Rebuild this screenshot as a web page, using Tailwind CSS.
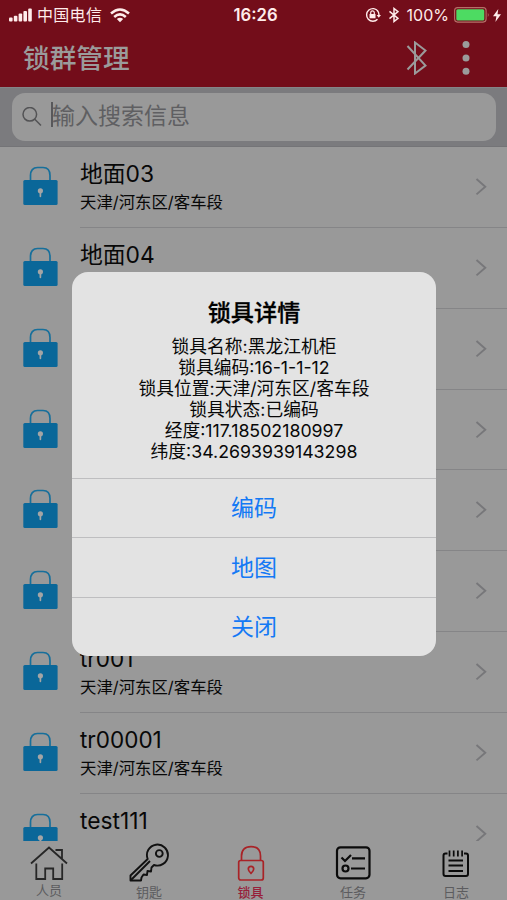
<!DOCTYPE html>
<html lang="zh-CN">
<head>
<meta charset="utf-8">
<title>锁群管理</title>
<script src="https://cdn.jsdelivr.net/npm/@tailwindcss/browser@4"></script>
</head>
<body class="bg-[#999]">
<svg class="hidden">
  <symbol id="lock" viewBox="0 0 36 42">
    <path d="M8.500 15V9.500C8.500 4.500 11 1.500 15.500 1.500H21C25.500 1.500 28 4.500 28 9.500V15" fill="none" stroke="#176f9b" stroke-width="1.700"/>
    <rect x="1.300" y="14" width="34.300" height="25" rx="1.500" fill="#0a6799"/>
    <circle cx="18.400" cy="24.800" r="2.600" fill="#a5a5a5"/>
    <path d="M18.400 25V30.300" stroke="#a5a5a5" stroke-width="1.700" stroke-linecap="round"/>
  </symbol>
  <symbol id="chev" viewBox="0 0 12 18">
    <path d="M1.500 1L10.300 8.700L1.500 16.400" fill="none" stroke="#77777a" stroke-width="1.900"/>
  </symbol>
</svg>
<div class="relative flex h-[900px] w-[507px] flex-col overflow-hidden bg-[#999] font-['Inter','Noto_Sans_CJK_SC',sans-serif] text-[#080808]">
  <header class="h-[87px] shrink-0 bg-[#730d1a]">
    <div class="grid h-[30px] grid-cols-3 items-center pr-[6px] pl-[9px] text-[#ffeceb]">
      <div class="flex items-center">
        <svg class="h-[14px] w-[23px]" viewBox="0 0 23 14" fill="currentColor"><rect x="0" y="9.500" width="3.600" height="4" rx="1"/><rect x="4.800" y="7.700" width="3.600" height="5.800" rx="1"/><rect x="9.600" y="5.500" width="3.600" height="8" rx="1"/><rect x="14.400" y="3" width="3.600" height="10.500" rx="1"/><rect x="19.200" y="0.500" width="3.600" height="13" rx="1"/></svg>
        <span class="ml-[5px] text-[16px] leading-none tracking-[0.3px]">中国电信</span>
        <svg class="ml-[8px] h-[15px] w-[20px]" viewBox="0 0 20 15" fill="none" stroke="currentColor" stroke-width="2.500"><path d="M1 5.500Q10 -2.500 19 5.500M4.200 9Q10 3.700 15.800 9"/><path d="M6.800 11Q10 8.300 13.200 11L10 14.300Z" fill="currentColor" stroke="none"/></svg>
      </div>
      <div class="pl-[1px] text-center text-[16.700px] leading-none font-semibold">16:26</div>
      <div class="flex items-center justify-end">
        <svg class="h-[16px] w-[16px]" viewBox="0 0 16 16" fill="none" stroke="currentColor"><path d="M13 4.200A6.300 6.300 0 1 0 12.500 12.200M14 8A6.300 6.300 0 0 0 12.300 3.500" stroke-width="1.400"/><path d="M11.600 8H16L13.800 10.800Z" fill="currentColor" stroke="none"/><rect x="4.500" y="7" width="6" height="4.300" fill="currentColor" stroke="none"/><path d="M5.700 7.500V5.700A1.800 1.800 0 0 1 9.300 5.700V7.500" stroke-width="1.200"/></svg>
        <svg class="ml-[8px] h-[16px] w-[10px]" viewBox="0 0 10 16" fill="none" stroke="currentColor" stroke-width="1.500"><path d="M0.500 4.300L9 11.300L5 14.500V1.500L9 4.700L0.500 11.700"/></svg>
        <span class="ml-[8px] text-[16px] leading-none">100%</span>
        <svg class="ml-[5px] h-[16px] w-[36px]" viewBox="0 0 36 16"><rect x="0.600" y="0.600" width="31.500" height="14.500" rx="3" fill="none" stroke="#b57068" stroke-width="1.100"/><rect x="2.300" y="2.300" width="28" height="11.200" rx="1.500" fill="#4ddb62"/><path d="M33.800 5.500Q35.600 7.800 33.800 10.200Z" fill="#b57068"/></svg>
        <svg class="ml-[3px] h-[13px] w-[8px]" viewBox="0 0 8 13" fill="currentColor"><path d="M5.300 0L0 7.300H3.400L2.400 13L8 5.300H4.500Z"/></svg>
      </div>
    </div>
    <div class="flex h-[56px] items-center pr-[37px] pl-[23px] text-[#9b9b9b]">
      <h1 class="grow text-[26.700px] leading-none font-medium">锁群管理</h1>
      <svg class="h-[34px] w-[21px]" viewBox="0 0 21 34" fill="none" stroke="currentColor" stroke-width="2"><path d="M1.500 5L19.500 24.500L9 32.500V1.500L19.500 9.500L1.500 28.500"/></svg>
      <svg class="ml-[35px] h-[36px] w-[8px]" viewBox="0 0 8 36" fill="currentColor"><circle cx="4" cy="4.500" r="3.500"/><circle cx="4" cy="18" r="3.500"/><circle cx="4" cy="31.300" r="3.500"/></svg>
    </div>
  </header>
  <div class="h-[60px] shrink-0 border-t border-b border-t-[#858588] border-b-[#747477] bg-[#7b7b7e] pt-[5px] pr-[11px] pl-[12px]">
    <div class="flex h-[48px] items-center rounded-[13px] bg-[#999] pl-[10px]">
      <svg class="h-[20px] w-[20px]" viewBox="0 0 20 20" fill="none" stroke="#535355" stroke-width="1.500"><circle cx="7.800" cy="7.300" r="6.800"/><path d="M12.800 12.300L19 18.500"/></svg>
      <span class="ml-[9px] h-[25px] w-[2px] -translate-y-[3px] bg-[#58585b]"></span>
      <span class="-ml-[1px] -translate-y-[1px] text-[23px] leading-none text-[#5f5f62]">输入搜索信息</span>
    </div>
  </div>
  <main class="flex h-[694px] shrink-0 flex-col overflow-hidden">
    <div class="flex h-[80.850px] shrink-0 pl-[22px]"><svg class="mt-[19px] h-[42px] w-[36px]"><use href="#lock"/></svg><div class="ml-[22px] flex grow border-b border-[#858587]"><div class="grow pt-[13px]"><div class="text-[22.800px] leading-[28px]">地面03</div><div class="mt-[4px] text-[16.400px] leading-[20px]">天津/河东区/客车段</div></div><svg class="mt-[31px] mr-[20px] h-[18px] w-[12px]"><use href="#chev"/></svg></div></div>
    <div class="flex h-[80.850px] shrink-0 pl-[22px]"><svg class="mt-[19px] h-[42px] w-[36px]"><use href="#lock"/></svg><div class="ml-[22px] flex grow border-b border-[#858587]"><div class="grow pt-[13px]"><div class="text-[22.800px] leading-[28px]">地面04</div></div><svg class="mt-[31px] mr-[20px] h-[18px] w-[12px]"><use href="#chev"/></svg></div></div>
    <div class="flex h-[80.850px] shrink-0 pl-[22px]"><svg class="mt-[19px] h-[42px] w-[36px]"><use href="#lock"/></svg><div class="ml-[22px] flex grow justify-end border-b border-[#858587]"><svg class="mt-[31px] mr-[20px] h-[18px] w-[12px]"><use href="#chev"/></svg></div></div>
    <div class="flex h-[80.850px] shrink-0 pl-[22px]"><svg class="mt-[19px] h-[42px] w-[36px]"><use href="#lock"/></svg><div class="ml-[22px] flex grow justify-end border-b border-[#858587]"><svg class="mt-[31px] mr-[20px] h-[18px] w-[12px]"><use href="#chev"/></svg></div></div>
    <div class="flex h-[80.850px] shrink-0 pl-[22px]"><svg class="mt-[19px] h-[42px] w-[36px]"><use href="#lock"/></svg><div class="ml-[22px] flex grow justify-end border-b border-[#858587]"><svg class="mt-[31px] mr-[20px] h-[18px] w-[12px]"><use href="#chev"/></svg></div></div>
    <div class="flex h-[80.850px] shrink-0 pl-[22px]"><svg class="mt-[19px] h-[42px] w-[36px]"><use href="#lock"/></svg><div class="ml-[22px] flex grow justify-end border-b border-[#858587]"><svg class="mt-[31px] mr-[20px] h-[18px] w-[12px]"><use href="#chev"/></svg></div></div>
    <div class="flex h-[80.850px] shrink-0 pl-[22px]"><svg class="mt-[19px] h-[42px] w-[36px]"><use href="#lock"/></svg><div class="ml-[22px] flex grow border-b border-[#858587]"><div class="grow pt-[13px]"><div class="text-[22.500px] leading-[28px]">tr001</div><div class="mt-[4px] text-[16.400px] leading-[20px]">天津/河东区/客车段</div></div><svg class="mt-[31px] mr-[20px] h-[18px] w-[12px]"><use href="#chev"/></svg></div></div>
    <div class="flex h-[80.850px] shrink-0 pl-[22px]"><svg class="mt-[19px] h-[42px] w-[36px]"><use href="#lock"/></svg><div class="ml-[22px] flex grow border-b border-[#858587]"><div class="grow pt-[13px]"><div class="text-[22.500px] leading-[28px]">tr00001</div><div class="mt-[4px] text-[16.400px] leading-[20px]">天津/河东区/客车段</div></div><svg class="mt-[31px] mr-[20px] h-[18px] w-[12px]"><use href="#chev"/></svg></div></div>
    <div class="flex h-[80.850px] shrink-0 pl-[22px]"><svg class="mt-[19px] h-[42px] w-[36px]"><use href="#lock"/></svg><div class="ml-[22px] flex grow"><div class="grow pt-[13px]"><div class="text-[22.800px] leading-[28px]">test111</div></div><svg class="mt-[31px] mr-[20px] h-[18px] w-[12px]"><use href="#chev"/></svg></div></div>
  </main>
  <nav class="flex h-[59px] shrink-0 bg-[#999] text-[13px] leading-[14px] text-[#5c5c5f]">
    <div class="flex w-[98px] flex-col items-center pt-[4px]"><svg class="h-[36px] w-[38px]" viewBox="0 0 38 36" fill="none" stroke="#272727" stroke-width="1.800"><path d="M1 18.500L19 2.500L37 18.500M25.500 5H32V14M6.300 18.500V34H15.200V23.500H23.200V34H32.200V18.500"/></svg><span class="mt-[2px]">人员</span></div>
    <div class="flex w-[102px] flex-col items-center pt-[2px]"><svg class="h-[39px] w-[40px]" viewBox="0 0 40 39" fill="none" stroke="#111" stroke-width="1.900" stroke-linejoin="round"><path d="M18.700 16A10.500 10.500 0 1 1 25 22L22.500 24.500L22 28.500L18.500 28L18 32L14.500 31.500L12.500 34.500L12 37.500H1.500V32.500Z"/><circle cx="30.300" cy="10.500" r="3.400"/><path d="M2 37L21 18"/></svg><span class="mt-[3px]">钥匙</span></div>
    <div class="flex w-[101px] flex-col items-center pt-[4px] font-medium text-[#97203a]"><svg class="h-[38px] w-[28px]" viewBox="0 0 28 38" fill="none" stroke="#a92327" stroke-width="1.700"><rect x="1.700" y="15.500" width="24.600" height="19.500" rx="2"/><path d="M4.500 15.500V11Q4.500 1.700 14 1.700Q23.500 1.700 23.500 11V15.500"/><path d="M14 28.300C12.500 27 11.300 25.500 11.300 24A2.700 2.700 0 0 1 16.700 24C16.700 25.500 15.500 27 14 28.300Z"/></svg><span class="mt-[2px]">锁具</span></div>
    <div class="flex w-[104px] flex-col items-center pt-[4px]"><svg class="h-[36px] w-[36px]" viewBox="0 0 36 36" fill="none" stroke="#0b0b0b" stroke-width="2.200"><rect x="2" y="2.300" width="32.500" height="31" rx="3.500"/><path d="M6.500 12.500L10 16L16 10M17 13.300H30M16 23.500H30"/><circle cx="10.500" cy="23.500" r="3"/></svg><span class="mt-[4px]">任务</span></div>
    <div class="flex w-[102px] flex-col items-center pt-[4px]"><svg class="h-[36px] w-[28px]" viewBox="0 0 28 36" fill="none" stroke="#0b0b0b" stroke-width="2"><path d="M5.500 8.500H3.500Q1.500 8.500 1.500 10.500V29Q1.500 31 3.500 31H24Q26 31 26 29V10.500Q26 8.500 24 8.500H22M6.500 15.500H21M6.500 20.500H21M6.500 26H21"/><path d="M7.500 5.500V11.500M11.700 5.500V11.500M15.900 5.500V11.500M20.100 5.500V11.500" stroke-width="1.700"/></svg><span class="mt-[4px]">日志</span></div>
  </nav>

  <section class="absolute top-[272px] left-[72px] flex h-[384px] w-[364px] flex-col overflow-hidden rounded-[16px] bg-[#e3e3e3] text-center">
    <div class="h-[206px] pt-[27px]">
      <h2 class="text-[23.200px] leading-[28px] font-medium text-black [-webkit-text-stroke:0.300px_#000]">锁具详情</h2>
      <div class="mt-[10px] text-[17.750px] leading-[20.900px] whitespace-nowrap">
        <p>锁具名称:黑龙江机柜</p>
        <p>锁具编码:16-1-1-12</p>
        <p>锁具位置:天津/河东区/客车段</p>
        <p>锁具状态:已编码</p>
        <p>经度:117.18502180997</p>
        <p>纬度:34.2693939143298</p>
      </div>
    </div>
    <button class="flex h-[59.400px] items-center justify-center border-t border-[#bebec0] pt-[1px] text-[23px] text-[#1479f5]">编码</button>
    <button class="flex h-[59.400px] items-center justify-center border-t border-[#bebec0] pt-[1px] text-[23px] text-[#1479f5]">地图</button>
    <button class="flex h-[59.400px] items-center justify-center border-t border-[#bebec0] pt-[1px] text-[23px] text-[#1479f5]">关闭</button>
  </section>
</div>
</body>
</html>
